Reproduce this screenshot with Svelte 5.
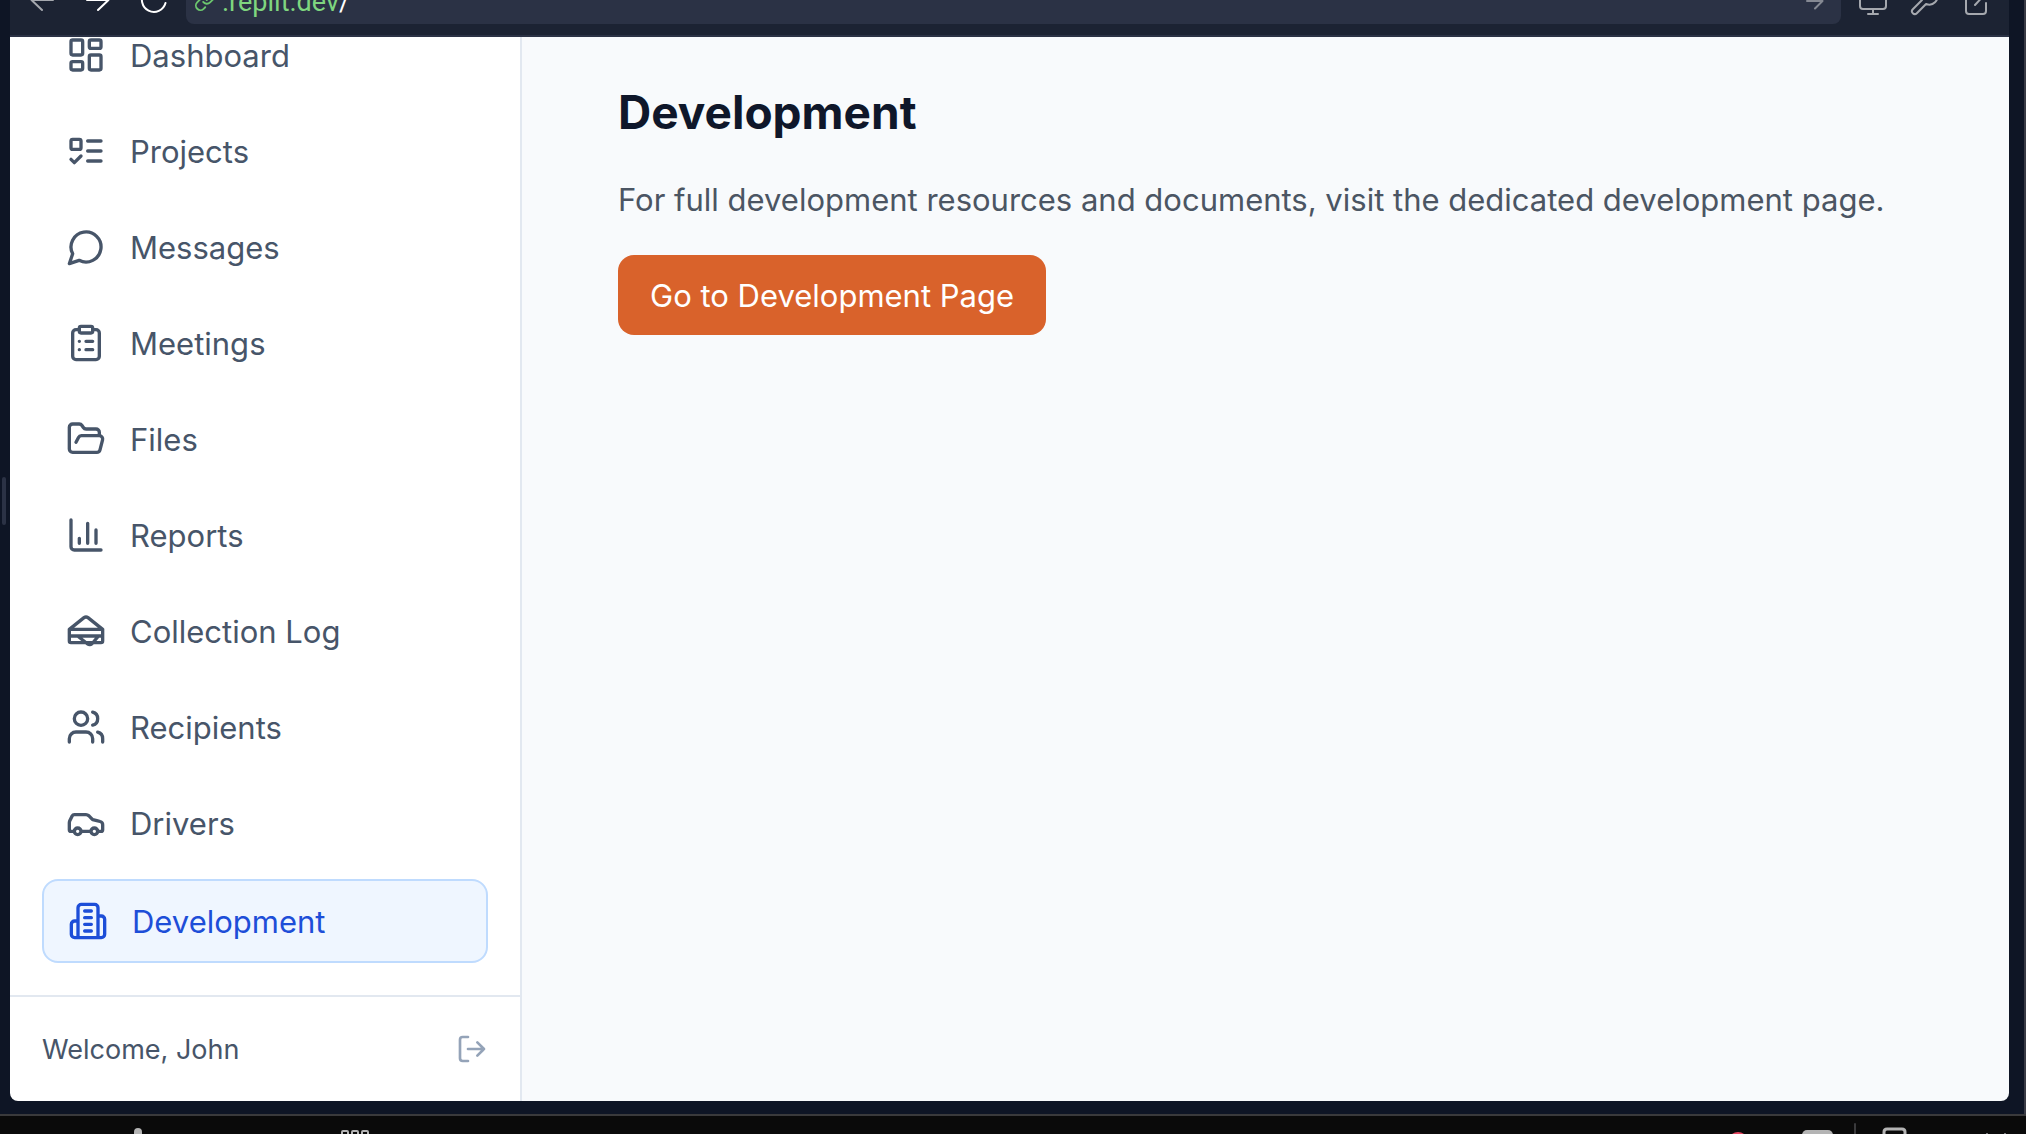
<script>
  const nav = [
    { label: 'Dashboard', icon: 'M4 3h5a1 1 0 0 1 1 1v7a1 1 0 0 1-1 1H4a1 1 0 0 1-1-1V4a1 1 0 0 1 1-1z M15 3h5a1 1 0 0 1 1 1v3a1 1 0 0 1-1 1h-5a1 1 0 0 1-1-1V4a1 1 0 0 1 1-1z M15 12h5a1 1 0 0 1 1 1v7a1 1 0 0 1-1 1h-5a1 1 0 0 1-1-1v-7a1 1 0 0 1 1-1z M4 16h5a1 1 0 0 1 1 1v3a1 1 0 0 1-1 1H4a1 1 0 0 1-1-1v-3a1 1 0 0 1 1-1z' },
    { label: 'Projects', icon: 'M4 5h4a1 1 0 0 1 1 1v4a1 1 0 0 1-1 1H4a1 1 0 0 1-1-1V6a1 1 0 0 1 1-1z m-1 12 2 2 4-4 M13 6h8 M13 12h8 M13 18h8' },
    { label: 'Messages', icon: 'M7.9 20A9 9 0 1 0 4 16.1L2 22Z' },
    { label: 'Meetings', icon: 'M9 2h6a1 1 0 0 1 1 1v2a1 1 0 0 1-1 1H9a1 1 0 0 1-1-1V3a1 1 0 0 1 1-1z M16 4h2a2 2 0 0 1 2 2v14a2 2 0 0 1-2 2H6a2 2 0 0 1-2-2V6a2 2 0 0 1 2-2h2 M12 11h4 M12 16h4 M8 11h.01 M8 16h.01' },
    { label: 'Files', icon: 'm6 14 1.5-2.9A2 2 0 0 1 9.24 10H20a2 2 0 0 1 1.94 2.5l-1.54 6a2 2 0 0 1-1.95 1.5H4a2 2 0 0 1-2-2V5a2 2 0 0 1 2-2h3.9a2 2 0 0 1 1.69.9l.81 1.2a2 2 0 0 0 1.67.9H18a2 2 0 0 1 2 2v2' },
    { label: 'Reports', icon: 'M3 3v16a2 2 0 0 0 2 2h16 M18 17V9 M13 17V5 M8 17v-3' },
    { label: 'Collection Log', icon: 'M2 11v7a1 1 0 0 0 1 1h18a1 1 0 0 0 1-1v-7 M2 11h20 M2 15h20 M2 11l8.800-7a2 2 0 0 1 2.400 0L22 11 M7 15l5.970 4.770a2 2 0 0 0 2.780-.27L19.500 15' },
    { label: 'Recipients', icon: 'M16 21v-2a4 4 0 0 0-4-4H6a4 4 0 0 0-4 4v2 M5 7a4 4 0 1 0 8 0a4 4 0 1 0-8 0 M22 21v-2a4 4 0 0 0-3-3.87 M16 3.13a4 4 0 0 1 0 7.75' },
    { label: 'Drivers', icon: 'M19 17h2c.6 0 1-.4 1-1v-3c0-.9-.7-1.7-1.5-1.9C18.7 10.6 16 10 16 10s-1.3-1.4-2.2-2.3c-.5-.4-1.1-.7-1.8-.7H5c-.6 0-1.1.4-1.4.9l-1.4 2.9A3.7 3.7 0 0 0 2 12v4c0 .6.4 1 1 1h2 M5 17a2 2 0 1 0 4 0a2 2 0 1 0-4 0 M9 17h6 M15 17a2 2 0 1 0 4 0a2 2 0 1 0-4 0' },
    { label: 'Development', active: true, icon: 'M6 22V4a2 2 0 0 1 2-2h8a2 2 0 0 1 2 2v18Z M6 12H4a2 2 0 0 0-2 2v6a2 2 0 0 0 2 2h2 M18 9h2a2 2 0 0 1 2 2v9a2 2 0 0 1-2 2h-2 M10 6h4 M10 10h4 M10 14h4 M10 18h4' }
  ];
</script>

<div class="frame">
  <div class="workspace">
    <div class="handle"></div>
    <div class="pane">
      <header class="toolbar">
        <div class="history">
          <button class="tool dim" aria-label="Back"><svg viewBox="0 0 32 32"><path d="M27 16H6 M16 5.500L5.500 16 16 26" /></svg></button>
          <button class="tool" aria-label="Forward"><svg viewBox="0 0 32 32"><path d="M5 16h21 M16 5.500L26.500 16 16 26" /></svg></button>
          <button class="tool" aria-label="Reload"><svg viewBox="0 0 32 32"><path d="M27.500 19A12 12 0 1 1 25 8M26 3v6h-6" /></svg></button>
        </div>
        <div class="address">
          <svg class="link" viewBox="0 0 24 24"><path d="M10 13a5 5 0 0 0 7.540.54l3-3a5 5 0 0 0-7.070-7.070l-1.720 1.710 M14 11a5 5 0 0 0-7.540-.54l-3 3a5 5 0 0 0 7.070 7.070l1.710-1.710" /></svg>
          <span class="url">.replit.dev<span class="path">/</span></span>
          <button class="go" aria-label="Go"><svg viewBox="0 0 24 24"><path d="M4 12h15 M12 4.500L19.500 12 12 19.500" /></svg></button>
        </div>
        <div class="actions">
          <button class="tool dim" aria-label="Device size"><svg viewBox="0 0 32 32"><path d="M6 4h20a3 3 0 0 1 3 3v13a3 3 0 0 1-3 3H6a3 3 0 0 1-3-3V7a3 3 0 0 1 3-3z M16 23v5 M11 28h10" /></svg></button>
          <button class="tool dim" aria-label="Developer tools"><svg viewBox="0 0 24 24" class="fine"><path d="M14.700 6.300a1 1 0 0 0 0 1.400l1.600 1.600a1 1 0 0 0 1.400 0l3.770-3.770a6 6 0 0 1-7.940 7.940l-6.910 6.910a2.120 2.120 0 0 1-3-3l6.910-6.910a6 6 0 0 1 7.940-7.940l-3.760 3.760z" /></svg></button>
          <button class="tool dim" aria-label="Open in new tab"><svg viewBox="0 0 32 32"><path d="M15 7h-5a3 3 0 0 0-3 3v15a3 3 0 0 0 3 3h14a3 3 0 0 0 3-3v-8 M16 19L28 6 M20 5h8v8" /></svg></button>
        </div>
      </header>
      <div class="app">
        <aside>
          <nav>
            {#each nav as item}
              <a href="#top" class:active={item.active}>
                <svg viewBox="0 0 24 24"><path d={item.icon} /></svg>
                <span>{item.label}</span>
              </a>
            {/each}
          </nav>
          <div class="user">
            <span>Welcome, John</span>
            <button aria-label="Log out"><svg viewBox="0 0 24 24"><path d="M9 21H5a2 2 0 0 1-2-2V5a2 2 0 0 1 2-2h4 M16 17l5-5-5-5 M21 12H9" /></svg></button>
          </div>
        </aside>
        <main>
          <h1>Development</h1>
          <p>For full development resources and documents, visit the dedicated development page.</p>
          <button class="primary">Go to Development Page</button>
        </main>
      </div>
    </div>
  </div>
  <footer>
    <svg class="mic" viewBox="0 0 8 16"><rect width="8" height="16" rx="4" /></svg>
    <svg class="grid" viewBox="0 0 28 16"><path d="M1 16V3q0-1 1-1h4q1 0 1 1v13 M11 16V3q0-1 1-1h4q1 0 1 1v13 M21 16V3q0-1 1-1h4q1 0 1 1v13" /></svg>
    <svg class="status" viewBox="0 0 282 18"><circle cx="6" cy="26" r="10" fill="#e5455f" /><rect x="70" y="14" width="31" height="14" rx="5" fill="#b4b4b4" /><path d="M123 8v10" stroke="#3a3a3c" stroke-width="2" /><path d="M152 18v-2q0-3 3-3h15q3 0 3 3v2" fill="none" stroke="#b4b4b4" stroke-width="3" /><path d="M255 17v1M273 17v1" stroke="#77777a" stroke-width="2" stroke-linecap="butt" /></svg>
  </footer>
</div>

<style>
  :global(body) { margin: 0; background: #0e1525; }
  .frame { height: 100vh; display: flex; flex-direction: column; overflow: hidden; font-family: Inter, "Liberation Sans", sans-serif; color: #4a5568; background: #0e1525; }
  svg { display: block; fill: none; stroke: currentColor; stroke-width: 2; stroke-linecap: round; stroke-linejoin: round; }
  button { border: 0; padding: 0; background: none; color: inherit; font: inherit; cursor: pointer; }
  .workspace { flex: 1; min-height: 0; display: flex; align-items: center; padding-bottom: 13px; padding-right: 15px; border-right: 2px solid #3a3b45; }
  .handle { width: 4px; height: 48px; margin: 0 4px 100px 2px; border-radius: 2px; background: #2b3245; }
  .pane { flex: 1; min-width: 0; height: 100%; display: flex; flex-direction: column; overflow: hidden; border-radius: 0 0 8px 8px; }
  .toolbar { height: 35px; flex: none; display: flex; align-items: flex-end; background: #1c2333; border-bottom: 2px solid #2b3245; color: #fff; }
  .history { display: flex; gap: 24px; padding: 0 16px 19px; }
  .tool svg { width: 32px; height: 32px; }
  .tool { height: 32px; }
  .dim { color: #a5a8ae; }
  .fine { stroke-width: 1.5; }
  .address { flex: 1; height: 44px; display: flex; align-items: center; gap: 6px; padding: 4px 14px 0 8px; margin-bottom: 11px; border-radius: 8px; background: #2b3245; }
  .address svg { margin-bottom: 2px; }
  .link { width: 22px; height: 22px; color: #6cc76e; }
  .url { flex: 1; color: #7fd67f; font-family: Roboto, "Liberation Sans", sans-serif; font-size: 27px; line-height: 32px; }
  .path { color: #fff; }
  .go { color: #858993; }
  .go svg { width: 24px; height: 24px; }
  .actions { display: flex; gap: 19px; padding: 0 18px 17px 16px; }
  .app { flex: 1; min-height: 0; display: flex; }
  aside { width: 510px; flex: none; display: flex; flex-direction: column; background: #fff; border-right: 2px solid #e2e8f0; }
  nav { flex: 1; min-height: 0; overflow: hidden; display: flex; flex-direction: column; justify-content: flex-end; gap: 16px; padding: 0 32px 32px; }
  nav a { display: flex; align-items: center; gap: 24px; padding: 16px 24px; border-radius: 16px; color: #475569; font-size: 31px; line-height: 46px; text-decoration: none; }
  nav span { padding-top: 2px; }
  nav svg { width: 40px; height: 40px; }
  nav .active { color: #1d4ed8; background: #eff6ff; border: 2px solid #bfdbfe; }
  .user { display: flex; align-items: center; justify-content: space-between; padding: 32px; border-top: 2px solid #e2e8f0; color: #475569; font-size: 27px; line-height: 38px; }
  .user span { padding-top: 2px; }
  .user button { color: #94a3b8; }
  .user svg { width: 32px; height: 32px; }
  main { flex: 1; display: flex; flex-direction: column; align-items: flex-start; padding: 43px 96px; background: #f8fafc; }
  h1 { margin: 0 0 32px; color: #0f172a; font-size: 46px; line-height: 64px; font-weight: 700; }
  p { margin: 0 0 31px; color: #4b5563; font-size: 31px; line-height: 48px; }
  .primary { padding: 17px 32px 15px; border-radius: 16px; background: #d9622b; color: #fff; font-size: 31px; line-height: 48px; }
  footer { height: 18px; flex: none; display: flex; align-items: flex-end; border-top: 2px solid #3a3a3c; background: #0a0a0a; overflow: hidden; }
  footer svg { flex: none; }
  .mic { width: 8px; height: 16px; margin: 0 0 -10px 134px; fill: #b4b4b4; stroke: none; }
  .grid { width: 28px; height: 16px; margin: 0 auto -11px 199px; color: #b4b4b4; }
  .status { width: 282px; height: 18px; stroke: none; margin-right: 12px; }
</style>
